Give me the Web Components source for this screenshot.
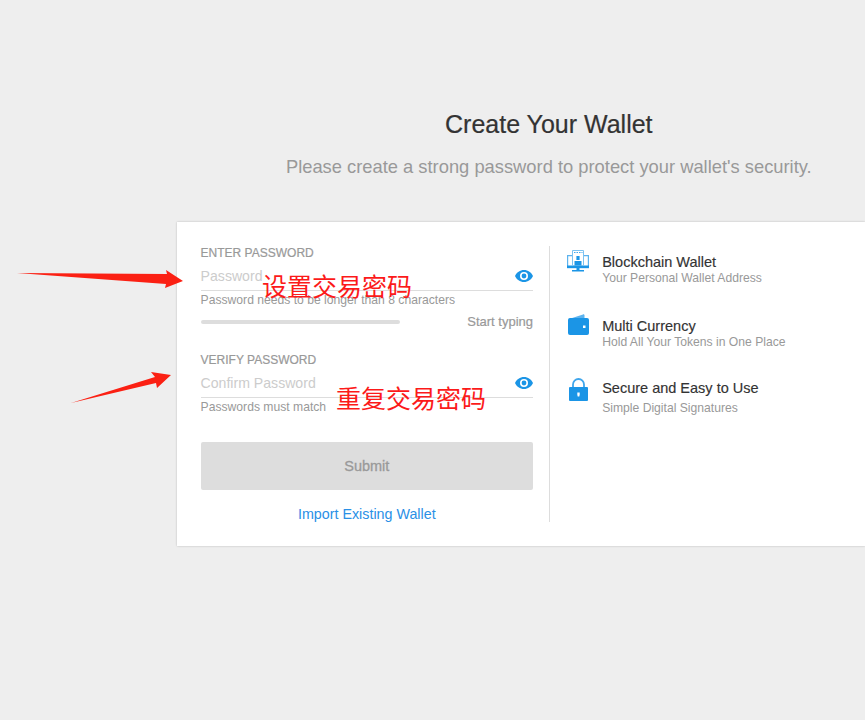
<!DOCTYPE html>
<html lang="en">
<head>
<meta charset="UTF-8">
<title>Create Your Wallet</title>
<style>
  html, body { margin: 0; height: 100%; overflow: hidden; background: #eee; }
  body { font-family: "Liberation Sans", Arial, sans-serif; position: relative; }
</style>
</head>
<body>
<wallet-page>
  <wallet-form slot="form"></wallet-form>
  <feature-item slot="features" icon="chain" h="64" name="Blockchain Wallet" note="Your Personal Wallet Address" gap="1"></feature-item>
  <feature-item slot="features" icon="wallet" h="62" name="Multi Currency" note="Hold All Your Tokens in One Place" gap="1"></feature-item>
  <feature-item slot="features" icon="lock" h="64" name="Secure and Easy to Use" note="Simple Digital Signatures" gap="5"></feature-item>
</wallet-page>
<red-notes></red-notes>

<script>
  const eye = `<svg width="18" height="12" viewBox="0 0 18 12"><path fill="#1b95e6" d="M9 0C5 0 1.600 2.500 0 6c1.600 3.500 5 6 9 6s7.400-2.500 9-6c-1.600-3.500-5-6-9-6zm0 10a4 4 0 1 1 0-8 4 4 0 0 1 0 8zm0-6.400a2.400 2.400 0 1 0 0 4.800 2.400 2.400 0 0 0 0-4.800z"/></svg>`

  const icons = {
    chain: `<svg width="24" height="24" viewBox="0 0 24 24" fill="none">
      <path stroke="#5db3ee" stroke-width="1.200" d="M6.500 5.600H1.600v12h20.800v-12H17.500"/>
      <path fill="#1b95e6" d="M1 15.500h22V18H1zM10.500 18h3v2h-3zM6 20h12v1.600H6z"/>
      <path stroke="#7cc2f1" d="M6.500 .5h11v15h-11z"/>
      <path stroke="#3fa6ec" stroke-width="1.200" stroke-dasharray="1.500 1" d="M8 2.500h8.500"/>
      <path fill="#1b95e6" d="M10.400 6h3.200v4h-3.200zM8.500 11h7v4.500h-7z"/>
    </svg>`,
    wallet: `<svg width="24" height="24" viewBox="0 0 24 24">
      <path fill="#5db3ee" d="M3 5 17 .4c.8-.2 1.500.3 1.500 1V5z"/>
      <path fill="#1b95e6" d="M4 4h17a2 2 0 0 1 2 2v13a2 2 0 0 1-2 2H4a2 2 0 0 1-2-2V6a2 2 0 0 1 2-2z"/>
      <rect fill="#fff" x="17" y="11.500" width="2.500" height="2.500"/>
    </svg>`,
    lock: `<svg width="24" height="26" viewBox="0 0 24 26">
      <path fill="none" stroke="#3fa6ec" stroke-width="1.800" d="M7 12V8.500a5.500 5.500 0 0 1 11 0V12"/>
      <path fill="#1b95e6" d="M4 11h17a1 1 0 0 1 1 1v12a1 1 0 0 1-1 1H4a1 1 0 0 1-1-1V12a1 1 0 0 1 1-1z"/>
      <path fill="#fff" d="M11.300 16.500h2.400v2l-.4 2h-1.600l-.4-2z"/>
    </svg>`
  }

  class WalletPage extends HTMLElement {
    constructor() {
      super()
      this.attachShadow({mode: 'open'}).innerHTML = `
        <style>
          :host { display: block; margin-left: 176.6px; padding-top: 110px; }
          h1, p { padding-left: 56px; text-align: center; }
          h1 { margin: 0; height: 28px; font-size: 25px; line-height: 28px; font-weight: 400; color: #333; -webkit-text-stroke: .2px #333; }
          p { margin: 17px 0 0; height: 24px; font-size: 18.330px; line-height: 24px; color: #999; }
          .card { margin-top: 43px; height: 324px; box-sizing: border-box; background: #fff; box-shadow: 0 0 2px rgba(0,0,0,.22); clip-path: inset(-3px 0 -3px -3px); padding: 24px 0 24px 24px; display: flex; }
          .left { width: 332.400px; padding-right: 16px; border-right: 1px solid #ddd; }
          .right { padding: 0 0 0 16.200px; display: flex; flex-direction: column; }
        </style>
        <h1>Create Your Wallet</h1>
        <p>Please create a strong password to protect your wallet's security.</p>
        <div class="card">
          <div class="left"><slot name="form"></slot></div>
          <div class="right"><slot name="features"></slot></div>
        </div>`
    }
  }

  class PasswordField extends HTMLElement {
    constructor() {
      super()
      this.attachShadow({mode: 'open'}).innerHTML = `
        <style>
          :host { display: block; }
          label { display: block; height: 14px; font-size: 12px; line-height: 14px; color: #999; -webkit-text-stroke: .2px #999; }
          .row { margin-top: 3px; height: 28px; box-sizing: border-box; border-bottom: 1px solid #ddd; display: flex; align-items: center; justify-content: space-between; padding-bottom: 1px; }
          .ph { font-size: 14.100px; color: #ccc; }
          .eye { display: flex; }
          .hint { height: 18px; font-size: 12.150px; line-height: 18px; color: #999; }
        </style>
        <label>${this.getAttribute('label')}</label>
        <div class="row"><span class="ph">${this.getAttribute('placeholder')}</span><span class="eye">${eye}</span></div>
        <div class="hint">${this.getAttribute('hint')}</div>
        <slot></slot>`
    }
  }

  class WalletForm extends HTMLElement {
    constructor() {
      super()
      this.attachShadow({mode: 'open'}).innerHTML = `
        <style>
          :host { display: block; }
          .strength { display: flex; align-items: center; justify-content: space-between; height: 24px; margin-bottom: 20px; }
          .bar { width: 199.400px; height: 4px; border-radius: 2px; background: #ddd; margin-top: 1px; }
          .state { font-size: 13px; color: #999; -webkit-text-stroke: .2px #999; }
          .submit { margin-top: 26px; height: 48px; border-radius: 2px; background: #ddd; color: #999; font-size: 14.500px; -webkit-text-stroke: .3px #999; display: flex; align-items: center; justify-content: center; }
          a { display: block; margin-top: 16px; font-size: 14.300px; line-height: 16px; text-align: center; color: #2a90e6; }
        </style>
        <password-field label="ENTER PASSWORD" placeholder="Password" hint="Password needs to be longer than 8 characters">
          <div class="strength"><div class="bar"></div><span class="state">Start typing</span></div>
        </password-field>
        <password-field label="VERIFY PASSWORD" placeholder="Confirm Password" hint="Passwords must match"></password-field>
        <div class="submit">Submit</div>
        <a>Import Existing Wallet</a>`
    }
  }

  class FeatureItem extends HTMLElement {
    constructor() {
      super()
      const gap = this.getAttribute('gap') || 0
      this.attachShadow({mode: 'open'}).innerHTML = `
        <style>
          :host { display: flex; height: ${this.getAttribute('h')}px; box-sizing: border-box; padding-top: 4px; }
          .ic { width: 24px; height: 26px; margin-right: 12px; }
          .name { font-size: 14.500px; line-height: 16px; color: #333; -webkit-text-stroke: .15px #333; padding-top: 4px; }
          .note { font-size: 12.150px; line-height: 14px; color: #999; margin-top: ${gap}px; }
        </style>
        <div class="ic">${icons[this.getAttribute('icon')]}</div>
        <div>
          <div class="name">${this.getAttribute('name')}</div>
          <div class="note">${this.getAttribute('note')}</div>
        </div>`
    }
  }

  // 红色标注，盖在截图内容上面
  class RedNotes extends HTMLElement {
    constructor() {
      super()
      this.attachShadow({mode: 'open'}).innerHTML = `
        <style>
          :host { position: absolute; inset: 0; display: block; pointer-events: none; }
          span { position: absolute; font-family: "Noto Sans CJK SC", sans-serif; font-size: 25px; line-height: 30px; color: #fc1a1a; white-space: nowrap; }
          svg { position: absolute; left: 0; top: 0; }
        </style>
        <svg width="865" height="720">
          <path fill="#fb2013" d="M17 273 167 274 166 270 183 281 165 288 166 284z"/>
          <path fill="#fb2013" d="M71 403 155 377 151 372 171 375 157 388 156 383z"/>
        </svg>
        <span style="left:262px;top:270px">设置交易密码</span>
        <span style="left:336px;top:382px">重复交易密码</span>`
    }
  }

  customElements.define('wallet-page', WalletPage)
  customElements.define('password-field', PasswordField)
  customElements.define('wallet-form', WalletForm)
  customElements.define('feature-item', FeatureItem)
  customElements.define('red-notes', RedNotes)
</script>
</body>
</html>
